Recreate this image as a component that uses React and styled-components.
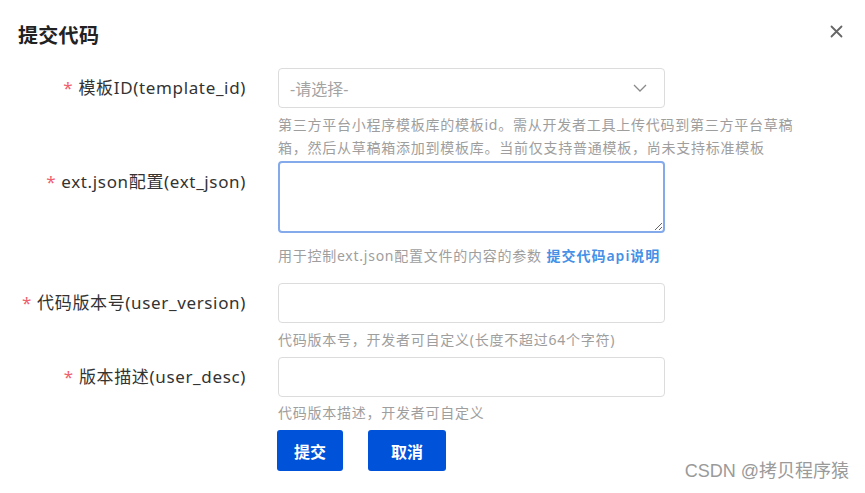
import React from "react";
import styled, { createGlobalStyle } from "styled-components";

const GlobalStyle = createGlobalStyle`
  html, body {
    margin: 0;
    padding: 0;
    background: #ffffff;
  }
  body {
    font-family: "Noto Sans", "Noto Sans CJK SC", sans-serif;
  }
`;

const fields = [
  {
    label: "模板ID(template_id)",
    kind: "select",
    help: "第三方平台小程序模板库的模板id。需从开发者工具上传代码到第三方平台草稿箱，然后从草稿箱添加到模板库。当前仅支持普通模板，尚未支持标准模板",
    helpTop: 5,
    after: 2,
  },
  {
    label: "ext.json配置(ext_json)",
    kind: "textarea",
    help: "用于控制ext.json配置文件的内容的参数",
    link: "提交代码api说明",
    helpTop: 11,
    after: 16,
  },
  {
    label: "代码版本号(user_version)",
    kind: "input",
    help: "代码版本号，开发者可自定义(长度不超过64个字符)",
    helpTop: 5,
    after: 6,
  },
  {
    label: "版本描述(user_desc)",
    kind: "input",
    help: "代码版本描述，开发者可自定义",
    helpTop: 4,
    after: 6,
  },
];

const App = () => {
  return (
    <Dialog>
      <GlobalStyle />
      <Header>
        <Title>提交代码</Title>
        <CloseButton aria-label="close">
          <svg width="13" height="13" viewBox="0 0 13 13">
            <path
              d="M1.5 1.5 L11.5 11.5 M11.5 1.5 L1.5 11.5"
              stroke="#666"
              strokeWidth="1.8"
              strokeLinecap="round"
            />
          </svg>
        </CloseButton>
      </Header>

      <Form>
        {fields.map((f) => (
          <Row key={f.label} after={f.after}>
            <Label tall={f.kind === "textarea"}>
              <Star>*</Star> {f.label}
            </Label>
            <Control>
              {f.kind === "select" && (
                <Select>
                  <Placeholder>-请选择-</Placeholder>
                  <svg width="14" height="8" viewBox="0 0 14 8">
                    <path
                      d="M1 1 L7 7 L13 1"
                      fill="none"
                      stroke="#8a8a8a"
                      strokeWidth="1.3"
                    />
                  </svg>
                </Select>
              )}
              {f.kind === "textarea" && <TextArea />}
              {f.kind === "input" && <Input />}
              <Help top={f.helpTop}>
                {f.help}
                {f.link && <HelpLink> {f.link}</HelpLink>}
              </Help>
            </Control>
          </Row>
        ))}
        <Row after={0}>
          <span />
          <Buttons>
            <Button width={66}>提交</Button>
            <Button width={78}>取消</Button>
          </Buttons>
        </Row>
      </Form>

      <Watermark>CSDN @拷贝程序猿</Watermark>
    </Dialog>
  );
};

export default App;

const Dialog = styled.div`
  position: relative;
  width: 865px;
  height: 493px;
  overflow: hidden;
  background: #ffffff;
  color: #333333;
`;

const Header = styled.div`
  display: flex;
  justify-content: space-between;
  align-items: center;
  padding: 22px 22px 0 18px;
  height: 28px;
`;

const Title = styled.h2`
  margin: 0;
  font-size: 20px;
  line-height: 28px;
  font-weight: 700;
  color: #222222;
  letter-spacing: 0.3px;
`;

const CloseButton = styled.div`
  display: flex;
  align-items: center;
  margin-top: -10px;
`;

const Form = styled.div`
  margin-top: 18px;
`;

const Row = styled.div`
  display: grid;
  grid-template-columns: 246px 1fr;
  column-gap: 32px;
  margin-bottom: ${({ after }) => after}px;
`;

const Label = styled.div`
  text-align: right;
  font-size: 17px;
  letter-spacing: 0.65px;
  line-height: ${({ tall }) => (tall ? "42px" : "40px")};
  color: #333333;
  white-space: nowrap;
`;

const Star = styled.span`
  color: #f0606f;
`;

const Control = styled.div`
  display: flex;
  flex-direction: column;
  align-items: flex-start;
`;

const Select = styled.div`
  box-sizing: border-box;
  width: 387px;
  height: 40px;
  border: 1px solid #dcdcdc;
  border-radius: 4px;
  display: flex;
  align-items: center;
  justify-content: space-between;
  padding: 0 17px 0 11px;
`;

const Placeholder = styled.span`
  font-size: 16px;
  color: #a3a3a3;
`;

const Input = styled.input`
  box-sizing: border-box;
  width: 387px;
  height: 40px;
  border: 1px solid #dcdcdc;
  border-radius: 4px;
  outline: none;
  margin: 0;
`;

const TextArea = styled.textarea`
  box-sizing: border-box;
  width: 387px;
  height: 72px;
  border: 2px solid #84aaec;
  border-radius: 4px;
  outline: none;
  margin: 0;
  display: block;
  resize: both;
`;

const Help = styled.div`
  width: 522px;
  margin-top: ${({ top }) => top}px;
  font-size: 14px;
  letter-spacing: 0.75px;
  line-height: 23px;
  color: #9e9e9e;
`;

const HelpLink = styled.span`
  color: #4690e6;
  font-weight: 600;
  letter-spacing: 1px;
`;

const Buttons = styled.div`
  display: flex;
  gap: 25px;
  margin-left: -1px;
`;

const Button = styled.button`
  width: ${({ width }) => width}px;
  height: 41px;
  border: none;
  border-radius: 3px;
  background: #0052d9;
  color: #ffffff;
  font-family: "Noto Sans CJK SC", sans-serif;
  font-size: 16px;
  font-weight: 700;
  cursor: pointer;
`;

const Watermark = styled.div`
  position: absolute;
  right: 16px;
  bottom: 11px;
  font-family: "Liberation Sans", "Noto Sans CJK SC", sans-serif;
  font-size: 18px;
  color: #9a9a9a;
`;
